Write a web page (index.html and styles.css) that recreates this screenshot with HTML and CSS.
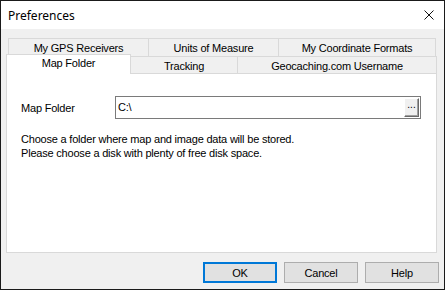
FILE: index.html
```html
<!DOCTYPE html>
<html lang="en">
<head>
    <meta charset="UTF-8">
    <title>Preferences</title>
    <link rel="stylesheet" href="styles.css">
</head>
<body>
    <div class="dialog">
        <div class="titlebar">
            <span class="title">Preferences</span>
            <svg class="close" width="10" height="10" viewBox="0 0 10 10">
                <path d="M0.5 0.5 L9.5 9.5 M9.5 0.5 L0.5 9.5" stroke="#111" stroke-width="1" fill="none"/>
            </svg>
        </div>
        <div class="content">
            <div class="tabs">
                <div class="tab-row back">
                    <div class="tab gps">My GPS Receivers</div>
                    <div class="tab units">Units of Measure</div>
                    <div class="tab coords">My Coordinate Formats</div>
                </div>
                <div class="tab-row front">
                    <div class="tab selected">Map Folder</div>
                    <div class="tab tracking">Tracking</div>
                    <div class="tab geo">Geocaching.com Username</div>
                </div>
            </div>
            <div class="panel">
                <div class="field">
                    <span class="label">Map Folder</span>
                    <div class="path-box">
                        <span class="path">C:\</span>
                        <div class="browse">...</div>
                    </div>
                </div>
                <p class="hint">Choose a folder where map and image data will be stored.<br>Please choose a disk with plenty of free disk space.</p>
            </div>
            <div class="buttons">
                <div class="btn default">OK</div>
                <div class="btn">Cancel</div>
                <div class="btn">Help</div>
            </div>
        </div>
    </div>
</body>
</html>
```
FILE: styles.css
```css
body{
    margin: 0;
    background: #fff;
    font-family: "Liberation Sans", Arial, sans-serif;
    font-size: 11px;
    letter-spacing: -0.2px;
    color: #000;
}
.dialog{
    width: 445px;
    height: 290px;
    box-sizing: border-box;
    border: 1px solid #1a1a1a;
    background: #f0f0f0;
    display: flex;
    flex-direction: column;
}
.titlebar{
    height: 28px;
    background: #fff;
    display: flex;
    align-items: center;
    justify-content: space-between;
    padding: 0 10px 0 7px;
}
.title{
    font-family: "Noto Sans", "Liberation Sans", sans-serif;
    font-size: 12px;
    letter-spacing: 0;
    color: #000;
}
.close{
    display: block;
}
.content{
    flex: 1;
    padding: 9px 0 0 0;
    display: flex;
    flex-direction: column;
}

/* tabs */
.tab-row{
    display: flex;
}
.tab-row.back{
    margin-left: 7px;
    height: 18px;
}
.tab-row.front{
    margin-left: 5px;
    height: 17px;
    align-items: flex-end;
}
.tab{
    box-sizing: border-box;
    height: 100%;
    border-top: 1px solid #d9d9d9;
    border-right: 1px solid #d9d9d9;
    display: flex;
    align-items: center;
    justify-content: center;
    background: #f0f0f0;
    white-space: nowrap;
}
.back .tab{
    padding-top: 1px;
}
.tab.gps{
    border-left: 1px solid #d9d9d9;
    width: 141px;
}
.tab.units{
    width: 130px;
}
.tab.coords{
    width: 157px;
}
.tab.selected{
    width: 125px;
    height: 20px;
    margin-bottom: -1px;
    border-left: 1px solid #d9d9d9;
    background: #fff;
    position: relative;
    z-index: 2;
    padding-bottom: 4px;
}
.tab.tracking{
    width: 107px;
    padding-top: 2px;
}
.tab.geo{
    width: 199px;
    padding-top: 2px;
}

.panel{
    margin-left: 5px;
    width: 431px;
    height: 180px;
    box-sizing: border-box;
    background: #fff;
    border: 1px solid #d9d9d9;
    padding: 22px 0 0 14px;
}
.field{
    display: flex;
    align-items: center;
}
.label{
    width: 94px;
}
.path-box{
    width: 306px;
    height: 23px;
    box-sizing: border-box;
    border: 1px solid #7a7a7a;
    display: flex;
    align-items: center;
    justify-content: space-between;
    padding: 0 1px 0 2px;
}
.path{
    padding-bottom: 2px;
}
.browse{
    width: 15px;
    height: 19px;
    box-sizing: border-box;
    background: #f0f0f0;
    border-top: 1px solid #fff;
    border-left: 1px solid #fff;
    border-right: 1px solid #696969;
    border-bottom: 1px solid #696969;
    box-shadow: inset -1px -1px 0 #a0a0a0;
    font-size: 10px;
    line-height: 12px;
    text-align: center;
    letter-spacing: 0;
}
.hint{
    margin: 13px 0 0 0;
    line-height: 14px;
}

.buttons{
    display: flex;
    justify-content: flex-end;
    gap: 7px;
    margin-top: 9px;
    padding-right: 5px;
}
.btn{
    width: 74px;
    height: 21px;
    box-sizing: border-box;
    background: #e1e1e1;
    border: 1px solid #adadad;
    display: flex;
    align-items: center;
    justify-content: center;
    font-size: 11px;
}
.btn.default{
    border: 2px solid #0078d7;
}
```
